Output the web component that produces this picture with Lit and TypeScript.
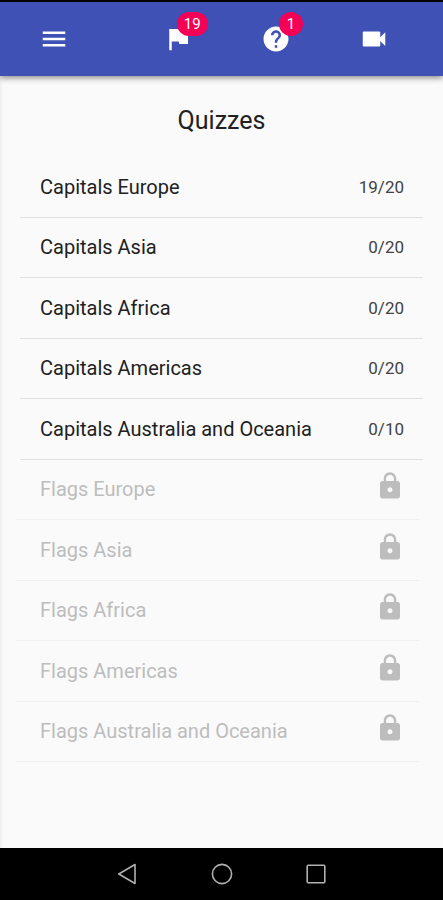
import { LitElement, html, css, svg, nothing } from "lit";
import { customElement, property } from "lit/decorators.js";

const ICONS = {
  menu: svg`<path d="M3 18h18v-2H3v2zm0-5h18v-2H3v2zm0-7v2h18V6H3z"/>`,
  flag: svg`<path d="M14.4 6L14 4H5v17h2v-7h5.6l.4 2h7V6z"/>`,
  help: svg`<path d="M12 2C6.48 2 2 6.48 2 12s4.480 10 10 10 10-4.480 10-10S17.520 2 12 2zm1 17h-2v-2h2v2zm2.070-7.750l-.9.920C13.450 12.900 13 13.500 13 15h-2v-.5c0-1.100.45-2.100 1.170-2.830l1.240-1.260c.37-.36.59-.86.59-1.410 0-1.100-.9-2-2-2s-2 .9-2 2H8c0-2.210 1.790-4 4-4s4 1.790 4 4c0 .88-.36 1.680-.93 2.250z"/>`,
  video: svg`<path d="M17 10.500V7c0-.55-.45-1-1-1H4c-.55 0-1 .45-1 1v10c0 .55.45 1 1 1h12c.55 0 1-.45 1-1v-3.500l4 4v-11l-4 4z"/>`,
  lock: svg`<path d="M18 8h-1V6c0-2.760-2.240-5-5-5S7 3.240 7 6v2H6c-1.100 0-2 .9-2 2v10c0 1.100.9 2 2 2h12c1.100 0 2-.9 2-2V10c0-1.100-.9-2-2-2zm-6 9c-1.100 0-2-.9-2-2s.9-2 2-2 2 .9 2 2-.9 2-2 2zm3.100-9H8.900V6c0-1.710 1.390-3.100 3.100-3.100 1.710 0 3.100 1.390 3.100 3.100v2z"/>`,
};

type IconName = keyof typeof ICONS;

const icon = (name: IconName) =>
  html`<svg class="icon" viewBox="0 0 24 24" aria-hidden="true">${ICONS[name]}</svg>`;

interface Quiz {
  name: string;
  score?: string;
}

const QUIZZES: Quiz[] = [
  { name: "Capitals Europe", score: "19/20" },
  { name: "Capitals Asia", score: "0/20" },
  { name: "Capitals Africa", score: "0/20" },
  { name: "Capitals Americas", score: "0/20" },
  { name: "Capitals Australia and Oceania", score: "0/10" },
  { name: "Flags Europe" },
  { name: "Flags Asia" },
  { name: "Flags Africa" },
  { name: "Flags Americas" },
  { name: "Flags Australia and Oceania" },
];

const shared = css`
  * {
    box-sizing: border-box;
  }
  button {
    margin: 0;
    padding: 0;
    border: 0;
    background: none;
    color: inherit;
    font: inherit;
    cursor: pointer;
  }
  .icon {
    display: block;
    flex: none;
    width: 30px;
    height: 30px;
    fill: currentColor;
  }
`;

@customElement("app-toolbar")
class AppToolbar extends LitElement {
  static styles = [
    shared,
    css`
      :host {
        display: block;
        position: relative;
        border-top: 2px solid #000;
        background: #3f51b5;
        color: #fff;
        box-shadow: 0 2px 6px rgba(0, 0, 0, 0.45);
      }
      .bar {
        display: flex;
        align-items: center;
        justify-content: space-between;
        height: 74px;
        padding: 0 20px;
      }
      .menu {
        display: grid;
        place-items: center;
        width: 68px;
        height: 48px;
      }
      .actions {
        display: flex;
        width: 73%;
      }
      .slot {
        flex: 1;
        display: flex;
        justify-content: center;
      }
      .action {
        position: relative;
        padding: 8px;
      }
      .badge {
        position: absolute;
        left: 50%;
        top: -4px;
        min-width: 24px;
        height: 24px;
        margin-left: 3px;
        padding: 0 7px;
        border-radius: 12px;
        background: #f50057;
        font-size: 15px;
        line-height: 24px;
        text-align: center;
      }
      .badge.wide {
        margin-left: -1px;
      }
    `,
  ];

  private action(name: IconName, label: string, count = 0) {
    return html`<div class="slot">
      <button class="action" aria-label=${label}>
        ${icon(name)}
        ${count ? html`<span class="badge ${count > 9 ? "wide" : ""}">${count}</span>` : nothing}
      </button>
    </div>`;
  }

  render() {
    return html`<header class="bar">
      <button class="menu" aria-label="Menu">${icon("menu")}</button>
      <div class="actions">
        ${this.action("flag", "Flags", 19)}
        ${this.action("help", "Hints", 1)}
        ${this.action("video", "Video")}
      </div>
    </header>`;
  }
}

@customElement("quiz-row")
class QuizRow extends LitElement {
  @property({ attribute: false }) quiz!: Quiz;

  static styles = [
    shared,
    css`
      :host {
        display: flex;
        flex: 1;
      }
      .row {
        flex: 1;
        display: flex;
        align-items: center;
        justify-content: space-between;
        padding: 0 19px 0 20px;
        border-bottom: 1px solid #e0e0e0;
        color: #212121;
        font-size: 20px;
        line-height: 24px;
        text-align: left;
      }
      .score {
        color: #424242;
        font-size: 17px;
      }
      .locked {
        margin: 0 4px 0 -4px;
        padding: 0 14px 0 24px;
        border-bottom-color: #f0f0f0;
        color: #bdbdbd;
        cursor: default;
      }
      .locked .icon {
        margin-bottom: 6px;
      }
    `,
  ];

  render() {
    const { name, score } = this.quiz;
    return score
      ? html`<button class="row"><span>${name}</span><span class="score">${score}</span></button>`
      : html`<button class="row locked" disabled><span>${name}</span>${icon("lock")}</button>`;
  }
}

@customElement("system-nav")
class SystemNav extends LitElement {
  static styles = [
    shared,
    css`
      :host {
        display: block;
        background: #000;
        color: #b0b0b0;
      }
      .nav {
        display: flex;
        justify-content: center;
        height: 52px;
      }
      .key {
        display: grid;
        place-items: center;
        width: 94px;
      }
      .glyph {
        width: 24px;
        height: 24px;
        fill: none;
        stroke: currentColor;
        stroke-width: 1.6;
        stroke-linejoin: round;
      }
    `,
  ];

  render() {
    return html`<nav class="nav">
      <button class="key" aria-label="Back">
        <svg class="glyph" viewBox="0 0 24 24"><path d="M19 2.500v19L2.800 12z" /></svg>
      </button>
      <button class="key" aria-label="Home">
        <svg class="glyph" viewBox="0 0 24 24"><circle cx="12" cy="12" r="9.600" /></svg>
      </button>
      <button class="key" aria-label="Overview">
        <svg class="glyph" viewBox="0 0 24 24"><rect x="3.200" y="3.200" width="17.600" height="17.600" rx="1" /></svg>
      </button>
    </nav>`;
  }
}

@customElement("app-root")
class AppRoot extends LitElement {
  static styles = [
    shared,
    css`
      :host {
        display: flex;
        flex-direction: column;
        min-height: 100vh;
        background: #fafafa;
        color: #212121;
        font-family: Roboto, "Liberation Sans", sans-serif;
      }
      .content {
        flex: 1;
        display: flex;
        flex-direction: column;
        gap: 20px;
        padding: 29px 20px 86px;
        box-shadow: inset 3px 0 2px -1px #f0f0f0;
      }
      .title {
        margin: 0;
        font-size: 25px;
        font-weight: 400;
        line-height: 32px;
        text-align: center;
      }
      .list {
        flex: 1;
        display: grid;
        grid-auto-rows: minmax(60px, 1fr);
        margin: 0;
        padding: 0;
        list-style: none;
      }
      .item {
        display: flex;
      }
    `,
  ];

  render() {
    return html`
      <app-toolbar></app-toolbar>
      <main class="content">
        <h1 class="title">Quizzes</h1>
        <ul class="list">
          ${QUIZZES.map((quiz) => html`<li class="item"><quiz-row .quiz=${quiz}></quiz-row></li>`)}
        </ul>
      </main>
      <system-nav></system-nav>
    `;
  }
}
